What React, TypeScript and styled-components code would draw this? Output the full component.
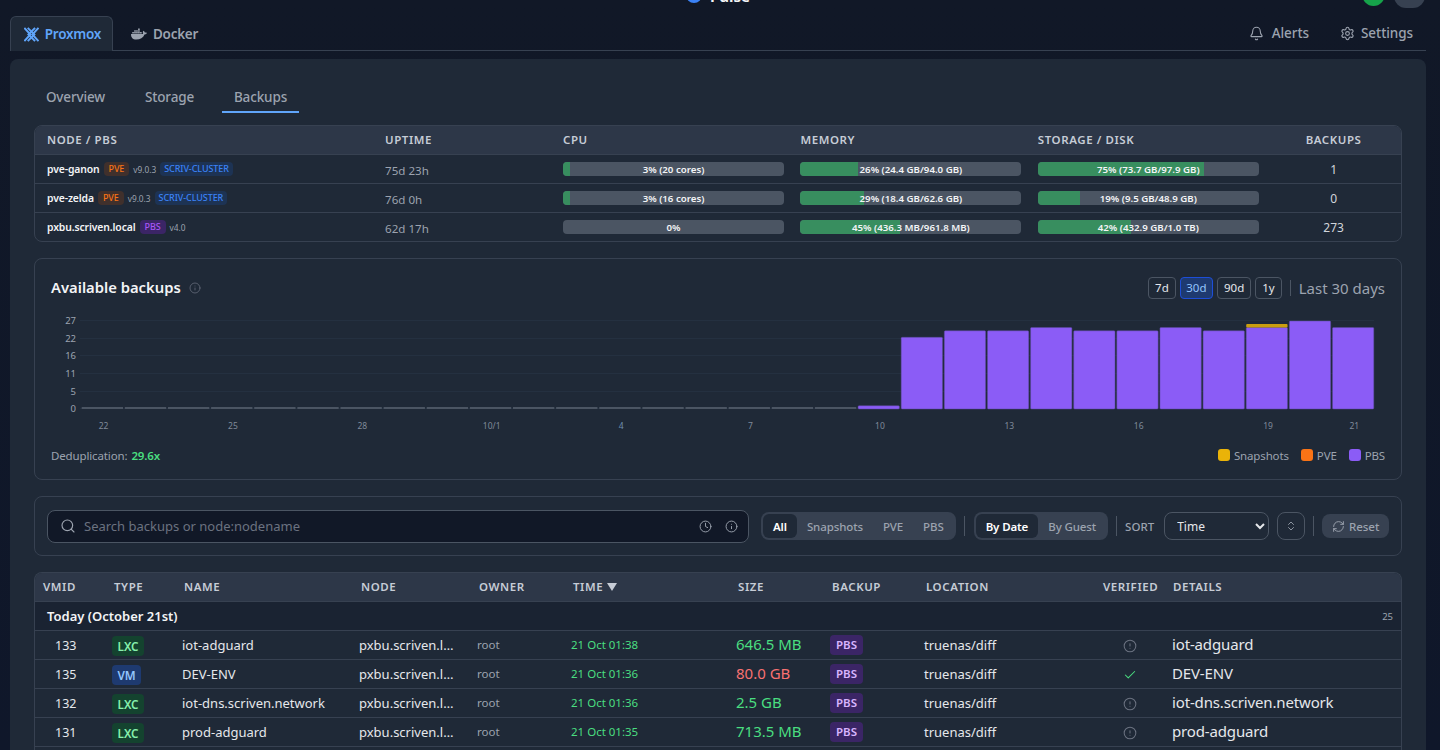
import React from "react";
import styled, { createGlobalStyle } from "styled-components";
import { Bell, Settings, Search, Clock, Info, ChevronsUpDown, RefreshCw, CircleAlert, Check } from "lucide-react";
import { FaDocker } from "react-icons/fa";

const Global = createGlobalStyle`
  html, body { margin: 0; height: 750px; overflow: hidden; background: #111827; color-scheme: dark; }
  body { font-family: "Noto Sans", "Liberation Sans", sans-serif; font-size: 14px; }
  * { box-sizing: border-box; }
`;

const Page = styled.div`
  height: 750px;
  overflow: hidden;
  padding: 0 14px 0 10px;
  background: linear-gradient(180deg, #111827 0%, #0f172a 100%);
`;
const TopBar = styled.div`
  height: 16px;
  display: grid;
  grid-template-columns: 1fr auto 1fr;
  align-items: start;
`;
const Brand = styled.div`
  grid-column: 2;
  margin-top: -20px;
  height: 23px;
  display: flex;
  align-items: flex-end;
  gap: 8px;
  color: #f3f4f6;
  font-size: 15px;
  font-weight: 700;
  line-height: 15px;
`;
const BrandText = styled.span`
  margin-bottom: -1px;
`;
const BrandDot = styled.span`
  width: 16px;
  height: 16px;
  border-radius: 50%;
  background: #3b82f6;
`;
const TopActions = styled.div`
  grid-column: 3;
  display: flex;
  justify-content: flex-end;
  gap: 9px;
  padding-right: 1px;
`;
const StatusDot = styled.span`
  width: 23px;
  height: 24px;
  margin-top: -18px;
  border-radius: 50%;
  background: #16a34a;
`;
const TopButton = styled.span`
  width: 31px;
  height: 26px;
  margin-top: -18px;
  border-radius: 12px;
  background: #374151;
`;
const TabBar = styled.nav`
  height: 35px;
  display: flex;
  align-items: stretch;
  border-bottom: 1px solid #374151;
`;
const MainTab = styled.div<{ $active?: boolean }>`
  display: flex;
  align-items: center;
  gap: 6px;
  padding: 0 ${(p) => (p.$active ? "11px 0 13px" : "15px 0 17px")};
  width: ${(p) => (p.$active ? "103px" : "auto")};
  margin-bottom: -1px;
  border: 1px solid ${(p) => (p.$active ? "#374151" : "transparent")};
  border-bottom: 0;
  border-radius: 6px 6px 0 0;
  background: ${(p) => (p.$active ? "#1f2937" : "transparent")};
  color: ${(p) => (p.$active ? "#60a5fa" : "#9ca3af")};
  font-size: 13.5px;
  font-weight: 600;
  letter-spacing: -0.02em;
`;
const Spacer = styled.div`
  flex: 1;
`;
const NavAction = styled.div<{ $gap: number }>`
  display: flex;
  align-items: center;
  gap: ${(p) => p.$gap}px;
  margin-right: 13px;
  margin-left: 18px;
  color: #9ca3af;
  font-size: 13.5px;
  font-weight: 500;
  letter-spacing: -0.005em;
`;
const Main = styled.main`
  margin-top: 8px;
  padding: 22px 24px 24px;
  min-height: 700px;
  border-radius: 8px 8px 0 0;
  background: #1f2937;
  display: flex;
  flex-direction: column;
`;
const SubTabs = styled.div`
  height: 32px;
  display: flex;
  gap: 14px;
  margin-bottom: 12px;
`;
const SubTab = styled.div<{ $active?: boolean; $w: number }>`
  width: ${(p) => p.$w}px;
  display: flex;
  align-items: center;
  justify-content: center;
  padding-top: 2px;
  border-bottom: 2px solid ${(p) => (p.$active ? "#60a5fa" : "transparent")};
  color: #9ca3af;
  font-size: 13.5px;
  font-weight: 500;
  letter-spacing: -0.01em;
`;
const Panel = styled.section`
  border: 1px solid #374151;
  border-radius: 8px;
  overflow: hidden;
`;
const SUMMARY_COLS = "338px 178px 237.4px 237.4px 237.4px 1fr";
const SummaryRow = styled.div<{ $head?: boolean }>`
  height: 29px;
  display: grid;
  grid-template-columns: ${SUMMARY_COLS};
  align-items: center;
  border-bottom: 1px solid #374151;
  background: ${(p) => (p.$head ? "#2d3748" : "transparent")};
  &:last-child { border-bottom: 0; height: 28px; }
`;
const HeadCell = styled.div<{ $center?: boolean }>`
  padding: 0 12px 1px;
  padding-left: ${(p) => (p.$center ? "15px" : "12px")};
  text-align: ${(p) => (p.$center ? "center" : "left")};
  color: #c6ccd6;
  font-size: 11.5px;
  font-weight: 600;
  letter-spacing: 0.05em;
  white-space: nowrap;
`;
const NodeCell = styled.div`
  padding-left: 12px;
  display: flex;
  align-items: center;
  gap: 4px;
`;
const NodeName = styled.span`
  color: #f3f4f6;
  font-size: 10.4px;
  font-weight: 600;
  letter-spacing: -0.012em;
`;
const Tag = styled.span<{ $bg: string; $fg: string }>`
  padding: 0 4px;
  height: 14px;
  line-height: 13px;
  border-radius: 4px;
  background: ${(p) => p.$bg};
  color: ${(p) => p.$fg};
  font-size: 9px;
  font-weight: 500;
  letter-spacing: -0.01em;
  white-space: nowrap;
`;
const KindTag = styled(Tag)`
  padding: 0 5px;
`;
const Version = styled.span`
  color: #9ca3af;
  font-size: 8.3px;
`;
const Uptime = styled.div`
  padding: 2px 0 0 12px;
  color: #9ca3af;
  font-size: 11.6px;
`;
const MeterCell = styled.div`
  padding: 0 4.4px 0 12px;
`;
const Meter = styled.div`
  position: relative;
  height: 14px;
  border-radius: 4px;
  overflow: hidden;
  background: #4b5563;
`;
const MeterFill = styled.div`
  height: 100%;
  background: #388e5f;
`;
const MeterLabel = styled.span`
  position: absolute;
  inset: 0;
  display: flex;
  align-items: center;
  justify-content: center;
  color: #f3f4f6;
  font-size: 9.7px;
  font-weight: 600;
  white-space: nowrap;
`;
const BackupCount = styled.div`
  padding: 1px 12px 0 15px;
  text-align: center;
  color: #d1d5db;
  font-size: 12px;
`;
const ChartPanel = styled(Panel)`
  margin-top: 16px;
  height: 222px;
  padding: 16px 16px 0;
  display: flex;
  flex-direction: column;
  flex: none;
`;
const ChartHead = styled.div`
  height: 25px;
  display: flex;
  align-items: center;
`;
const ChartTitle = styled.h2`
  margin: 0 0 1px;
  color: #f3f4f6;
  font-size: 14.8px;
  font-weight: 600;
`;
const TitleInfo = styled.span`
  display: flex;
  margin-left: 8px;
  color: #6b7280;
`;
const RangeGroup = styled.div`
  display: flex;
  align-items: center;
  gap: 4px;
`;
const RangeButton = styled.span<{ $active?: boolean }>`
  height: 22px;
  padding: 0 ${(p) => (p.$active ? "5.5px" : "6px")};
  display: flex;
  align-items: center;
  border: 1px solid ${(p) => (p.$active ? "#1d4ed8" : "#4b5563")};
  border-radius: 4px;
  background: ${(p) => (p.$active ? "#1e3a70" : "transparent")};
  color: ${(p) => (p.$active ? "#93c5fd" : "#e5e7eb")};
  font-size: 11.5px;
`;
const RangeDivider = styled.span`
  width: 1px;
  height: 16px;
  margin: 0 8px;
  background: #4b5563;
`;
const RangeLabel = styled.span`
  color: #9ca3af;
  font-size: 15px;
`;
const ChartSvg = styled.svg`
  display: block;
  margin: 0 -16px;
  flex: none;
`;
const ChartFoot = styled.div`
  height: 20px;
  margin-top: 13px;
  display: flex;
  align-items: center;
  color: #9ca3af;
  font-size: 11.5px;
  letter-spacing: -0.012em;
`;
const Dedup = styled.b`
  margin-left: 4px;
  color: #4ade80;
  font-weight: 600;
`;
const Legend = styled.span`
  display: flex;
  align-items: center;
  gap: 4px;
  margin-left: 12px;
`;
const Swatch = styled.i<{ $c: string }>`
  width: 12px;
  height: 12px;
  border-radius: 3px;
  background: ${(p) => p.$c};
`;
const FilterPanel = styled(Panel)`
  margin-top: 16px;
  height: 60px;
  padding: 0 12px;
  display: flex;
  align-items: center;
  flex: none;
`;
const SearchBox = styled.div`
  flex: none;
  width: 702px;
  height: 33px;
  margin-right: 12px;
  padding: 0 10px 0 12px;
  display: flex;
  align-items: center;
  gap: 8px;
  border: 1px solid #4b5563;
  border-radius: 8px;
  background: #111827;
  color: #9ca3af;
`;
const SearchText = styled.span`
  flex: 1;
  color: #6b7280;
  font-size: 13px;
`;
const SearchIcons = styled.span`
  display: flex;
  gap: 13px;
`;
const Segment = styled.div`
  height: 28px;
  padding: 2px;
  flex: none;
  display: flex;
  border-radius: 8px;
  background: #374151;
  align-items: stretch;
`;
const SegmentItem = styled.span<{ $active?: boolean }>`
  padding: 0 10px;
  display: flex;
  align-items: center;
  border-radius: 6px;
  background: ${(p) => (p.$active ? "#1f2937" : "transparent")};
  color: ${(p) => (p.$active ? "#ffffff" : "#9ca3af")};
  font-size: 11.5px;
  font-weight: ${(p) => (p.$active ? 600 : 500)};
  letter-spacing: -0.01em;
  white-space: nowrap;
`;
const VLine = styled.span<{ $l: number; $r: number }>`
  flex: none;
  width: 1px;
  height: 20px;
  margin: 0 ${(p) => p.$r}px 0 ${(p) => p.$l}px;
  background: #4b5563;
`;
const SortLabel = styled.span`
  color: #9ca3af;
  font-size: 11.5px;
  font-weight: 500;
  margin-right: 10px;
`;
const SortSelect = styled.select`
  flex: none;
  width: 105px;
  height: 28px;
  padding: 0 6px 0 8px;
  border: 1px solid #4b5563;
  border-radius: 8px;
  background: #1f2937;
  color: #e5e7eb;
  font-family: inherit;
  font-size: 12px;
`;
const IconButton = styled.span`
  flex: none;
  width: 28px;
  height: 28px;
  margin-left: 8px;
  display: flex;
  align-items: center;
  justify-content: center;
  border: 1px solid #4b5563;
  border-radius: 8px;
  color: #9ca3af;
`;
const ResetButton = styled.span`
  flex: none;
  width: 67px;
  height: 24px;
  display: flex;
  align-items: center;
  justify-content: center;
  gap: 4px;
  border-radius: 8px;
  background: #374151;
  color: #9ca3af;
  font-size: 11.5px;
  font-weight: 500;
`;
const DataPanel = styled(Panel)`
  margin-top: 16px;
  border-radius: 8px 8px 0 0;
  border-bottom: 0;
  min-height: 220px;
  flex: none;
`;
const DATA_COLS = "71px 70px 177px 118px 94px 165px 94px 94px 177px 70px 1fr";
const DataHead = styled.div`
  height: 29px;
  display: grid;
  grid-template-columns: ${DATA_COLS};
  align-items: center;
  border-bottom: 1px solid #374151;
  background: #2d3748;
`;
const DataHeadCell = styled.div`
  padding: 0 0 1px 8px;
  color: #c6ccd6;
  font-size: 11.5px;
  font-weight: 600;
  letter-spacing: 0.05em;
  white-space: nowrap;
  display: flex;
  align-items: center;
  gap: 4px;
`;
const SortArrow = styled.i`
  width: 0;
  height: 0;
  border-left: 5px solid transparent;
  border-right: 5px solid transparent;
  border-top: 8px solid #c6ccd6;
`;
const GroupRow = styled.div`
  height: 29px;
  padding: 0 8px 0 12px;
  display: flex;
  align-items: center;
  justify-content: space-between;
  border-bottom: 1px solid #374151;
  background: #1a2332;
`;
const GroupTitle = styled.span`
  color: #f3f4f6;
  font-size: 13px;
  font-weight: 600;
`;
const GroupCount = styled.span`
  color: #9ca3af;
  font-size: 9.5px;
`;
const DataRow = styled.div`
  height: 29px;
  display: grid;
  grid-template-columns: ${DATA_COLS};
  align-items: center;
  border-bottom: 1px solid #374151;
`;
const Vmid = styled.div`
  padding-left: 20px;
  color: #e5e7eb;
  font-size: 12.5px;
`;
const TypeCell = styled.div`
  padding: 2px 0 0 6px;
`;
const TypeBadge = styled.span<{ $vm: boolean }>`
  display: block;
  width: fit-content;
  height: 20px;
  line-height: 21px;
  padding: 0 5.5px;
  border-radius: 4px;
  background: ${(p) => (p.$vm ? "#1e3a70" : "#14432f")};
  color: ${(p) => (p.$vm ? "#93c5fd" : "#86efac")};
  font-size: 11.7px;
  font-weight: 600;
`;
const TextCell = styled.div<{ $size: number; $color: string }>`
  padding-left: 6px;
  margin-top: -2px;
  color: ${(p) => p.$color};
  font-size: ${(p) => p.$size}px;
  white-space: nowrap;
  overflow: hidden;
  text-overflow: ellipsis;
`;
const BodyCell = styled(TextCell)`
  margin-top: 0;
`;
const HostCell = styled(BodyCell)`
  padding-right: 10px;
`;
const DetailCell = styled(TextCell)`
  padding-left: 7px;
  letter-spacing: -0.01em;
`;
const PbsBadge = styled.span`
  display: block;
  height: 20px;
  line-height: 20px;
  padding: 0 6px;
  margin-left: 6px;
  width: fit-content;
  border-radius: 4px;
  background: #3b2566;
  color: #d8b4fe;
  font-size: 11.5px;
  font-weight: 600;
`;
const VerifyCell = styled.div<{ $ok: boolean }>`
  display: flex;
  justify-content: center;
  padding-top: 2px;
  color: ${(p) => (p.$ok ? "#4ade80" : "#6b7280")};
`;

const ProxmoxIcon = () => (
  <svg width="15" height="15" viewBox="0 0 15 15" fill="none" stroke="currentColor" strokeWidth="2" strokeLinecap="square">
    <path d="M1 1.5l5.5 6-5.5 6" />
    <path d="M14 1.5l-5.5 6 5.5 6" />
    <path d="M4.5 1.5l6 6-6 6" />
    <path d="M10.5 1.5l-6 6 6 6" />
  </svg>
);

const nodes = [
  { name: "pve-ganon", kind: "PVE", ver: "v9.0.3", cluster: true, up: "75d 23h", cpu: [3, "3% (20 cores)"], mem: [26, "26% (24.4 GB/94.0 GB)"], disk: [75, "75% (73.7 GB/97.9 GB)"], backups: 1 },
  { name: "pve-zelda", kind: "PVE", ver: "v9.0.3", cluster: true, up: "76d 0h", cpu: [3, "3% (16 cores)"], mem: [29, "29% (18.4 GB/62.6 GB)"], disk: [19, "19% (9.5 GB/48.9 GB)"], backups: 0 },
  { name: "pxbu.scriven.local", kind: "PBS", ver: "v4.0", cluster: false, up: "62d 17h", cpu: [0, "0%"], mem: [45, "45% (436.3 MB/961.8 MB)"], disk: [42, "42% (432.9 GB/1.0 TB)"], backups: 273 },
] as const;

const rows = [
  { id: 133, type: "LXC", name: "iot-adguard", time: "21 Oct 01:38", size: "646.5 MB", big: false, ok: false },
  { id: 135, type: "VM", name: "DEV-ENV", time: "21 Oct 01:36", size: "80.0 GB", big: true, ok: true },
  { id: 132, type: "LXC", name: "iot-dns.scriven.network", time: "21 Oct 01:36", size: "2.5 GB", big: false, ok: false },
  { id: 131, type: "LXC", name: "prod-adguard", time: "21 Oct 01:35", size: "713.5 MB", big: false, ok: false },
];

const values = [0,0,0,0,0,0,0,0,0,0,0,0,0,0,0,0,0,0,1,22,24,24,25,24,24,25,24,25,27,25];
const ticks = [[0,"22"],[3,"25"],[6,"28"],[9,"10/1"],[12,"4"],[15,"7"],[18,"10"],[21,"13"],[24,"16"],[27,"19"],[29,"21"]] as const;
const gridLines = [[27,320],[22,338],[16,355],[11,373],[5,391],[0,408]] as const;

const Meterbar = ({ v, label }: { v: number; label: string }) => (
  <MeterCell>
    <Meter>
      <MeterFill style={{ width: `${v}%` }} />
      <MeterLabel>{label}</MeterLabel>
    </Meter>
  </MeterCell>
);

const Chart = () => {
  const step = 43.13;
  const x0 = 82 - 35;
  const base = 409 - 300;
  const unit = 88 / 27;
  return (
    <ChartSvg width="1366" height="132" viewBox="0 0 1366 132">
      {gridLines.map(([v, y]) => (
        <g key={v}>
          <line x1={x0 - 2} x2={1339} y1={y - 300 + 0.5} y2={y - 300 + 0.5} stroke="#243040" strokeWidth="1" />
          <text x={41} y={y - 300 + 3.5} textAnchor="end" fill="#9ca3af" fontSize="9.5" fontFamily="Noto Sans, sans-serif">{v}</text>
        </g>
      ))}
      {values.map((v, i) => {
        const x = x0 + step * i - 0.3;
        const w = step - 1.8;
        if (v === 0) return <rect key={i} x={x} y={base - 2} width={w} height={2} fill="#4b5563" />;
        const h = v * unit;
        return <rect key={i} x={x} y={base - h} width={w} height={h} rx="1" fill="#8b5cf6" stroke="#5b4a9a" strokeWidth="0.5" />;
      })}
      <rect x={x0 + step * 27 - 0.3} y={base - 25 * unit - 3.5} width={step - 1.8} height={3.5} rx="1" fill="#eab308" opacity="0.85" />
      {ticks.map(([i, t]) => (
        <text key={t} x={x0 + step * (i + 0.5)} y={129} textAnchor="middle" fill={t === "4" ? "#6f8fb0" : "#7f8a99"} fontSize="8.5" fontFamily="Noto Sans, sans-serif">{t}</text>
      ))}
    </ChartSvg>
  );
};

export default function App() {
  return (
    <Page>
      <Global />
      <TopBar>
        <Brand><BrandDot /><BrandText>Pulse</BrandText></Brand>
        <TopActions><StatusDot /><TopButton /></TopActions>
      </TopBar>
      <TabBar>
        <MainTab $active><ProxmoxIcon />Proxmox</MainTab>
        <MainTab><FaDocker size={16} />Docker</MainTab>
        <Spacer />
        <NavAction $gap={8}><Bell size={15} strokeWidth={1.75} />Alerts</NavAction>
        <NavAction $gap={6}><Settings size={15} strokeWidth={1.75} />Settings</NavAction>
      </TabBar>
      <Main>
        <SubTabs>
          <SubTab $w={83}>Overview</SubTab>
          <SubTab $w={77}>Storage</SubTab>
          <SubTab $active $w={77}>Backups</SubTab>
        </SubTabs>
        <Panel>
          <SummaryRow $head>
            <HeadCell>NODE / PBS</HeadCell>
            <HeadCell>UPTIME</HeadCell>
            <HeadCell>CPU</HeadCell>
            <HeadCell>MEMORY</HeadCell>
            <HeadCell>STORAGE / DISK</HeadCell>
            <HeadCell $center>BACKUPS</HeadCell>
          </SummaryRow>
          {nodes.map((n) => (
            <SummaryRow key={n.name}>
              <NodeCell>
                <NodeName>{n.name}</NodeName>
                {n.kind === "PVE" ? <KindTag $bg="#40302c" $fg="#f97316">PVE</KindTag> : <KindTag $bg="#3b2566" $fg="#a855f7">PBS</KindTag>}
                <Version>{n.ver}</Version>
                {n.cluster && <Tag $bg="#1d3354" $fg="#3b82f6">SCRIV-CLUSTER</Tag>}
              </NodeCell>
              <Uptime>{n.up}</Uptime>
              <Meterbar v={n.cpu[0]} label={n.cpu[1]} />
              <Meterbar v={n.mem[0]} label={n.mem[1]} />
              <Meterbar v={n.disk[0]} label={n.disk[1]} />
              <BackupCount>{n.backups}</BackupCount>
            </SummaryRow>
          ))}
        </Panel>
        <ChartPanel>
          <ChartHead>
            <ChartTitle>Available backups</ChartTitle>
            <TitleInfo><Info size={12} strokeWidth={1.5} /></TitleInfo>
            <Spacer />
            <RangeGroup>
              <RangeButton>7d</RangeButton>
              <RangeButton $active>30d</RangeButton>
              <RangeButton>90d</RangeButton>
              <RangeButton>1y</RangeButton>
            </RangeGroup>
            <RangeDivider />
            <RangeLabel>Last 30 days</RangeLabel>
          </ChartHead>
          <Chart />
          <ChartFoot>
            Deduplication:<Dedup>29.6x</Dedup>
            <Spacer />
            <Legend><Swatch $c="#eab308" />Snapshots</Legend>
            <Legend><Swatch $c="#f97316" />PVE</Legend>
            <Legend><Swatch $c="#8b5cf6" />PBS</Legend>
          </ChartFoot>
        </ChartPanel>
        <FilterPanel>
          <SearchBox>
            <Search size={16} strokeWidth={1.75} />
            <SearchText>Search backups or node:nodename</SearchText>
            <SearchIcons>
              <Clock size={13} strokeWidth={1.75} />
              <Info size={13} strokeWidth={1.75} />
            </SearchIcons>
          </SearchBox>
          <Segment>
            <SegmentItem $active>All</SegmentItem>
            <SegmentItem>Snapshots</SegmentItem>
            <SegmentItem>PVE</SegmentItem>
            <SegmentItem>PBS</SegmentItem>
          </Segment>
          <VLine $l={8} $r={9} />
          <Segment>
            <SegmentItem $active>By Date</SegmentItem>
            <SegmentItem>By Guest</SegmentItem>
          </Segment>
          <VLine $l={8} $r={8} />
          <SortLabel>SORT</SortLabel>
          <SortSelect defaultValue="Time"><option>Time</option></SortSelect>
          <IconButton><ChevronsUpDown size={12} strokeWidth={1.75} /></IconButton>
          <VLine $l={8} $r={8} />
          <ResetButton><RefreshCw size={13} strokeWidth={1.75} />Reset</ResetButton>
        </FilterPanel>
        <DataPanel>
          <DataHead>
            <DataHeadCell>VMID</DataHeadCell>
            <DataHeadCell>TYPE</DataHeadCell>
            <DataHeadCell>NAME</DataHeadCell>
            <DataHeadCell>NODE</DataHeadCell>
            <DataHeadCell>OWNER</DataHeadCell>
            <DataHeadCell>TIME <SortArrow /></DataHeadCell>
            <DataHeadCell>SIZE</DataHeadCell>
            <DataHeadCell>BACKUP</DataHeadCell>
            <DataHeadCell>LOCATION</DataHeadCell>
            <DataHeadCell>VERIFIED</DataHeadCell>
            <DataHeadCell>DETAILS</DataHeadCell>
          </DataHead>
          <GroupRow>
            <GroupTitle>Today (October 21st)</GroupTitle>
            <GroupCount>25</GroupCount>
          </GroupRow>
          {rows.map((r) => (
            <DataRow key={r.id}>
              <Vmid>{r.id}</Vmid>
              <TypeCell><TypeBadge $vm={r.type === "VM"}>{r.type}</TypeBadge></TypeCell>
              <BodyCell $size={13} $color="#e5e7eb">{r.name}</BodyCell>
              <HostCell $size={13} $color="#e5e7eb">pxbu.scriven.local</HostCell>
              <TextCell $size={11.5} $color="#9ca3af">root</TextCell>
              <TextCell $size={11.5} $color="#4ade80">{r.time}</TextCell>
              <TextCell $size={15} $color={r.big ? "#f87171" : "#4ade80"}>{r.size}</TextCell>
              <PbsBadge>PBS</PbsBadge>
              <BodyCell $size={13} $color="#e5e7eb">truenas/diff</BodyCell>
              <VerifyCell $ok={r.ok}>{r.ok ? <Check size={14} strokeWidth={1.75} /> : <CircleAlert size={14} strokeWidth={1.75} />}</VerifyCell>
              <DetailCell $size={15} $color="#e5e7eb">{r.name}</DetailCell>
            </DataRow>
          ))}
        </DataPanel>
      </Main>
    </Page>
  );
}
